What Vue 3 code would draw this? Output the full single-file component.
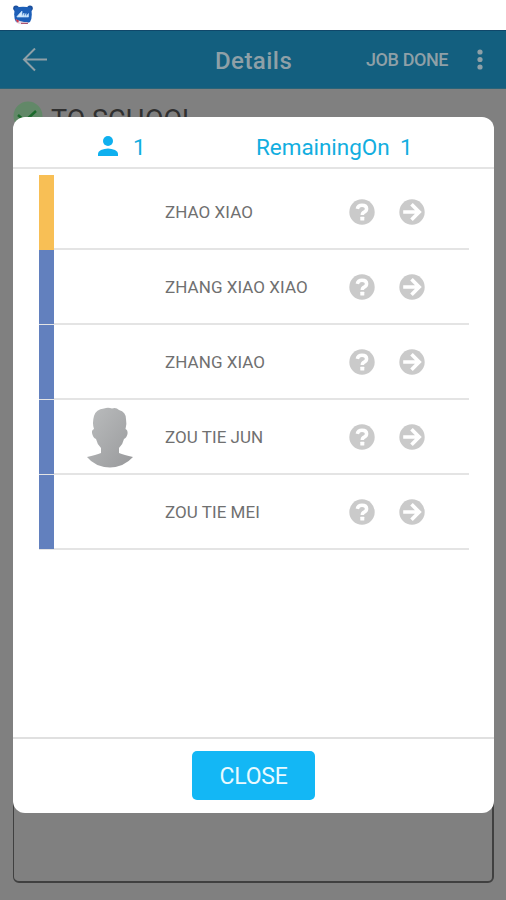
<script setup>
const people = [
  { name: 'ZHAO XIAO', tone: 'amber' },
  { name: 'ZHANG XIAO XIAO', tone: 'blue' },
  { name: 'ZHANG XIAO', tone: 'blue' },
  { name: 'ZOU TIE JUN', tone: 'blue', photo: true },
  { name: 'ZOU TIE MEI', tone: 'blue' }
]
</script>

<template>
  <div class="screen">
    <div class="status">
      <svg class="bear" width="22" height="20" viewBox="0 0 22 20">
        <circle cx="4" cy="3.2" r="2.8" fill="#1c4f9c" />
        <circle cx="18" cy="3.2" r="2.8" fill="#1c4f9c" />
        <path d="M3 2.500Q11 1 19 2.500Q21 12 18 17Q11 21 4 17Q1 12 3 2.500Z" fill="#1d5fb8" />
        <path d="M4 14.500Q8 16 12 17L17 17Q11 21 5 18Z" fill="#e9dce6" />
        <path d="M3 14L7 15.500L6 18Z" fill="#cf3348" />
        <path d="M9 18.300H16" stroke="#9c3656" stroke-width="1" />
        <path d="M5 11.500L8.500 7.500L10 6L10 11L12 8V11.500L14 8.500V11.500L16.500 8.500V12H5Z" fill="#d9edff" stroke="#b8d9f7" stroke-width=".7" />
      </svg>
    </div>
    <header class="bar">
      <svg class="back" width="26" height="24" viewBox="0 0 26 24">
        <path d="M25 11.500H2M13 .5L2 11.500L13 22.500" fill="none" stroke="#8fa0a7" stroke-width="2" />
      </svg>
      <h1 class="title">Details</h1>
      <span class="job">JOB DONE</span>
      <svg class="more" width="6" height="22" viewBox="0 0 6 22">
        <circle cx="3" cy="3" r="2.600" /><circle cx="3" cy="10.500" r="2.600" /><circle cx="3" cy="18" r="2.600" />
      </svg>
    </header>
    <main class="page">
      <div class="school">
        <svg width="30" height="30" viewBox="0 0 30 30">
          <circle cx="15" cy="15" r="14.500" fill="#628868" />
          <path d="M5 14L12 20L23 10" fill="none" stroke="#1b6a2c" stroke-width="2.500" />
        </svg>
        <span class="place">TO SCHOOL</span>
      </div>
      <div class="frame"></div>
    </main>

    <section class="dialog">
      <div class="summary">
        <svg class="person" width="20" height="20" viewBox="0 0 20 20">
          <circle cx="10" cy="5" r="5" /><path d="M0 20V17.500Q0 15.500 3 14Q10 11 17 14Q20 15.500 20 17.500V20Z" />
        </svg>
        <span class="count">1</span>
        <span class="remaining">RemainingOn</span>
        <span class="left">1</span>
      </div>
      <ul class="list">
        <li v-for="p in people" :key="p.name" class="row">
          <span class="stripe" :class="p.tone"></span>
          <span class="photo">
            <svg v-if="p.photo" width="48" height="61" viewBox="0 0 48 61">
              <defs>
                <linearGradient id="shade" x1="0" y1="0" x2="1" y2="1">
                  <stop offset="0" stop-color="#bbbdbe" /><stop offset="1" stop-color="#98999b" />
                </linearGradient>
              </defs>
              <path fill="url(#shade)" d="M8 22Q6 16 8 9Q10 2 18 1.500Q22 0 26 1.500Q30 0 33 3Q40 5 40 12Q41 17 39.500 22Q42 23 41.500 27Q40.500 31 38 32Q37 37 33 41V46Q38 48 47 50Q38 60 24 60.500Q9 60 1 50Q10 48 15 46V41Q11 37 10 32Q7 31 6 26Q5.500 23 8 22Z" />
            </svg>
          </span>
          <span class="name">{{ p.name }}</span>
          <svg class="icon help" width="26" height="26" viewBox="0 0 26 26">
            <circle cx="13" cy="13" r="12.700" fill="#cacaca" />
            <path d="M8.300 9.800Q9 6.300 13 6.300Q17.600 6.300 17.600 9.700Q17.600 12 15.200 13.100Q13.300 14 13.300 16" fill="none" stroke="#fff" stroke-width="3.500" />
            <rect x="11.300" y="17.800" width="4" height="3.700" rx=".5" fill="#fff" />
          </svg>
          <svg class="icon" width="26" height="26" viewBox="0 0 26 26">
            <circle cx="13" cy="13" r="12.700" fill="#cacaca" />
            <path d="M4.200 13H19.500M12.500 5.300L20.200 13L12.500 20.700" fill="none" stroke="#fff" stroke-width="3.600" />
          </svg>
        </li>
      </ul>
      <footer class="actions">
        <button class="close">CLOSE</button>
      </footer>
    </section>
  </div>
</template>

<style>
body { margin: 0; }
</style>

<style scoped>
* { box-sizing: border-box; }
.screen {
  position: relative;
  display: flex;
  flex-direction: column;
  width: 506px;
  height: 900px;
  overflow: hidden;
  background: #808080;
  font-family: Roboto, "Liberation Sans", sans-serif;
}
.status { height: 30px; padding: 5px 0 0 12px; background: #fff; }
.bear { display: block; }
.bar {
  display: flex;
  align-items: center;
  height: 59px;
  padding-left: 22px;
  background: #135f7f;
  border-top: 1px solid #10476a;
  border-bottom: 1px solid #2b6478;
  color: #8fa0a7;
}
.back { flex: none; }
.title { width: 78px; margin: 2px 0 0 167px; font-size: 24px; font-weight: 500; line-height: 30px; letter-spacing: .45px; white-space: nowrap; }
.job { width: 84px; margin: 0 0 0 73px; font-size: 18px; font-weight: 500; line-height: 24px; letter-spacing: -.4px; white-space: nowrap; }
.more { margin-left: 27px; fill: #8fa0a7; }
.page { display: flex; flex: 1; flex-direction: column; padding: 12px 12px 17px 13px; }
.school { display: flex; height: 34px; gap: 8px; color: #303030; font-size: 27px; line-height: 34px; white-space: nowrap; }
.place { padding-top: 2px; }
.frame { flex: 1; border: solid #404040; border-width: 1px 2px 2px 1px; border-radius: 6px; }
.dialog {
  position: absolute;
  top: 117px;
  left: 13px;
  display: flex;
  flex-direction: column;
  width: 481px;
  height: 696px;
  border-radius: 12px;
  background: #fff;
}
.summary {
  display: flex;
  align-items: center;
  height: 52px;
  padding: 7px 0 0 85px;
  border-bottom: 2px solid #e4e4e4;
  color: #12aee0;
  font-size: 22.5px;
  line-height: 28px;
}
.summary span { padding-top: 3px; }
.person { fill: #0fb0ef; }
.count { width: 16px; margin-left: 15px; }
.remaining { width: 136px; margin-left: 107px; letter-spacing: -.05px; }
.left { margin-left: 8px; }
.list { flex: 1; margin: 0; padding: 6px 25px 0 26px; list-style: none; }
.row { display: flex; align-items: center; height: 75.1px; border-bottom: 2px solid #e4e4e4; }
.stripe { align-self: stretch; width: 15px; margin-bottom: -1px; }
.amber { margin-bottom: -2px; background: #f8bf55; }
.blue { background: #6280be; }
.photo { display: flex; width: 111px; padding: 1px 0 0 32px; }
.name { width: 184px; padding-top: 1px; color: #707070; font-size: 17px; line-height: 24px; letter-spacing: .05px; white-space: nowrap; }
.icon { flex: none; }
.help { margin-right: 24px; }
.actions { display: flex; justify-content: center; height: 76px; padding-top: 12px; border-top: 2px solid #e0e0e0; }
.close { width: 123px; height: 49px; padding: 3px 0 0; border: 0; border-radius: 5px; background: #13b7f5; color: #e9faff; font: 400 23px/28px Roboto, "Liberation Sans", sans-serif; letter-spacing: -.2px; }
</style>
